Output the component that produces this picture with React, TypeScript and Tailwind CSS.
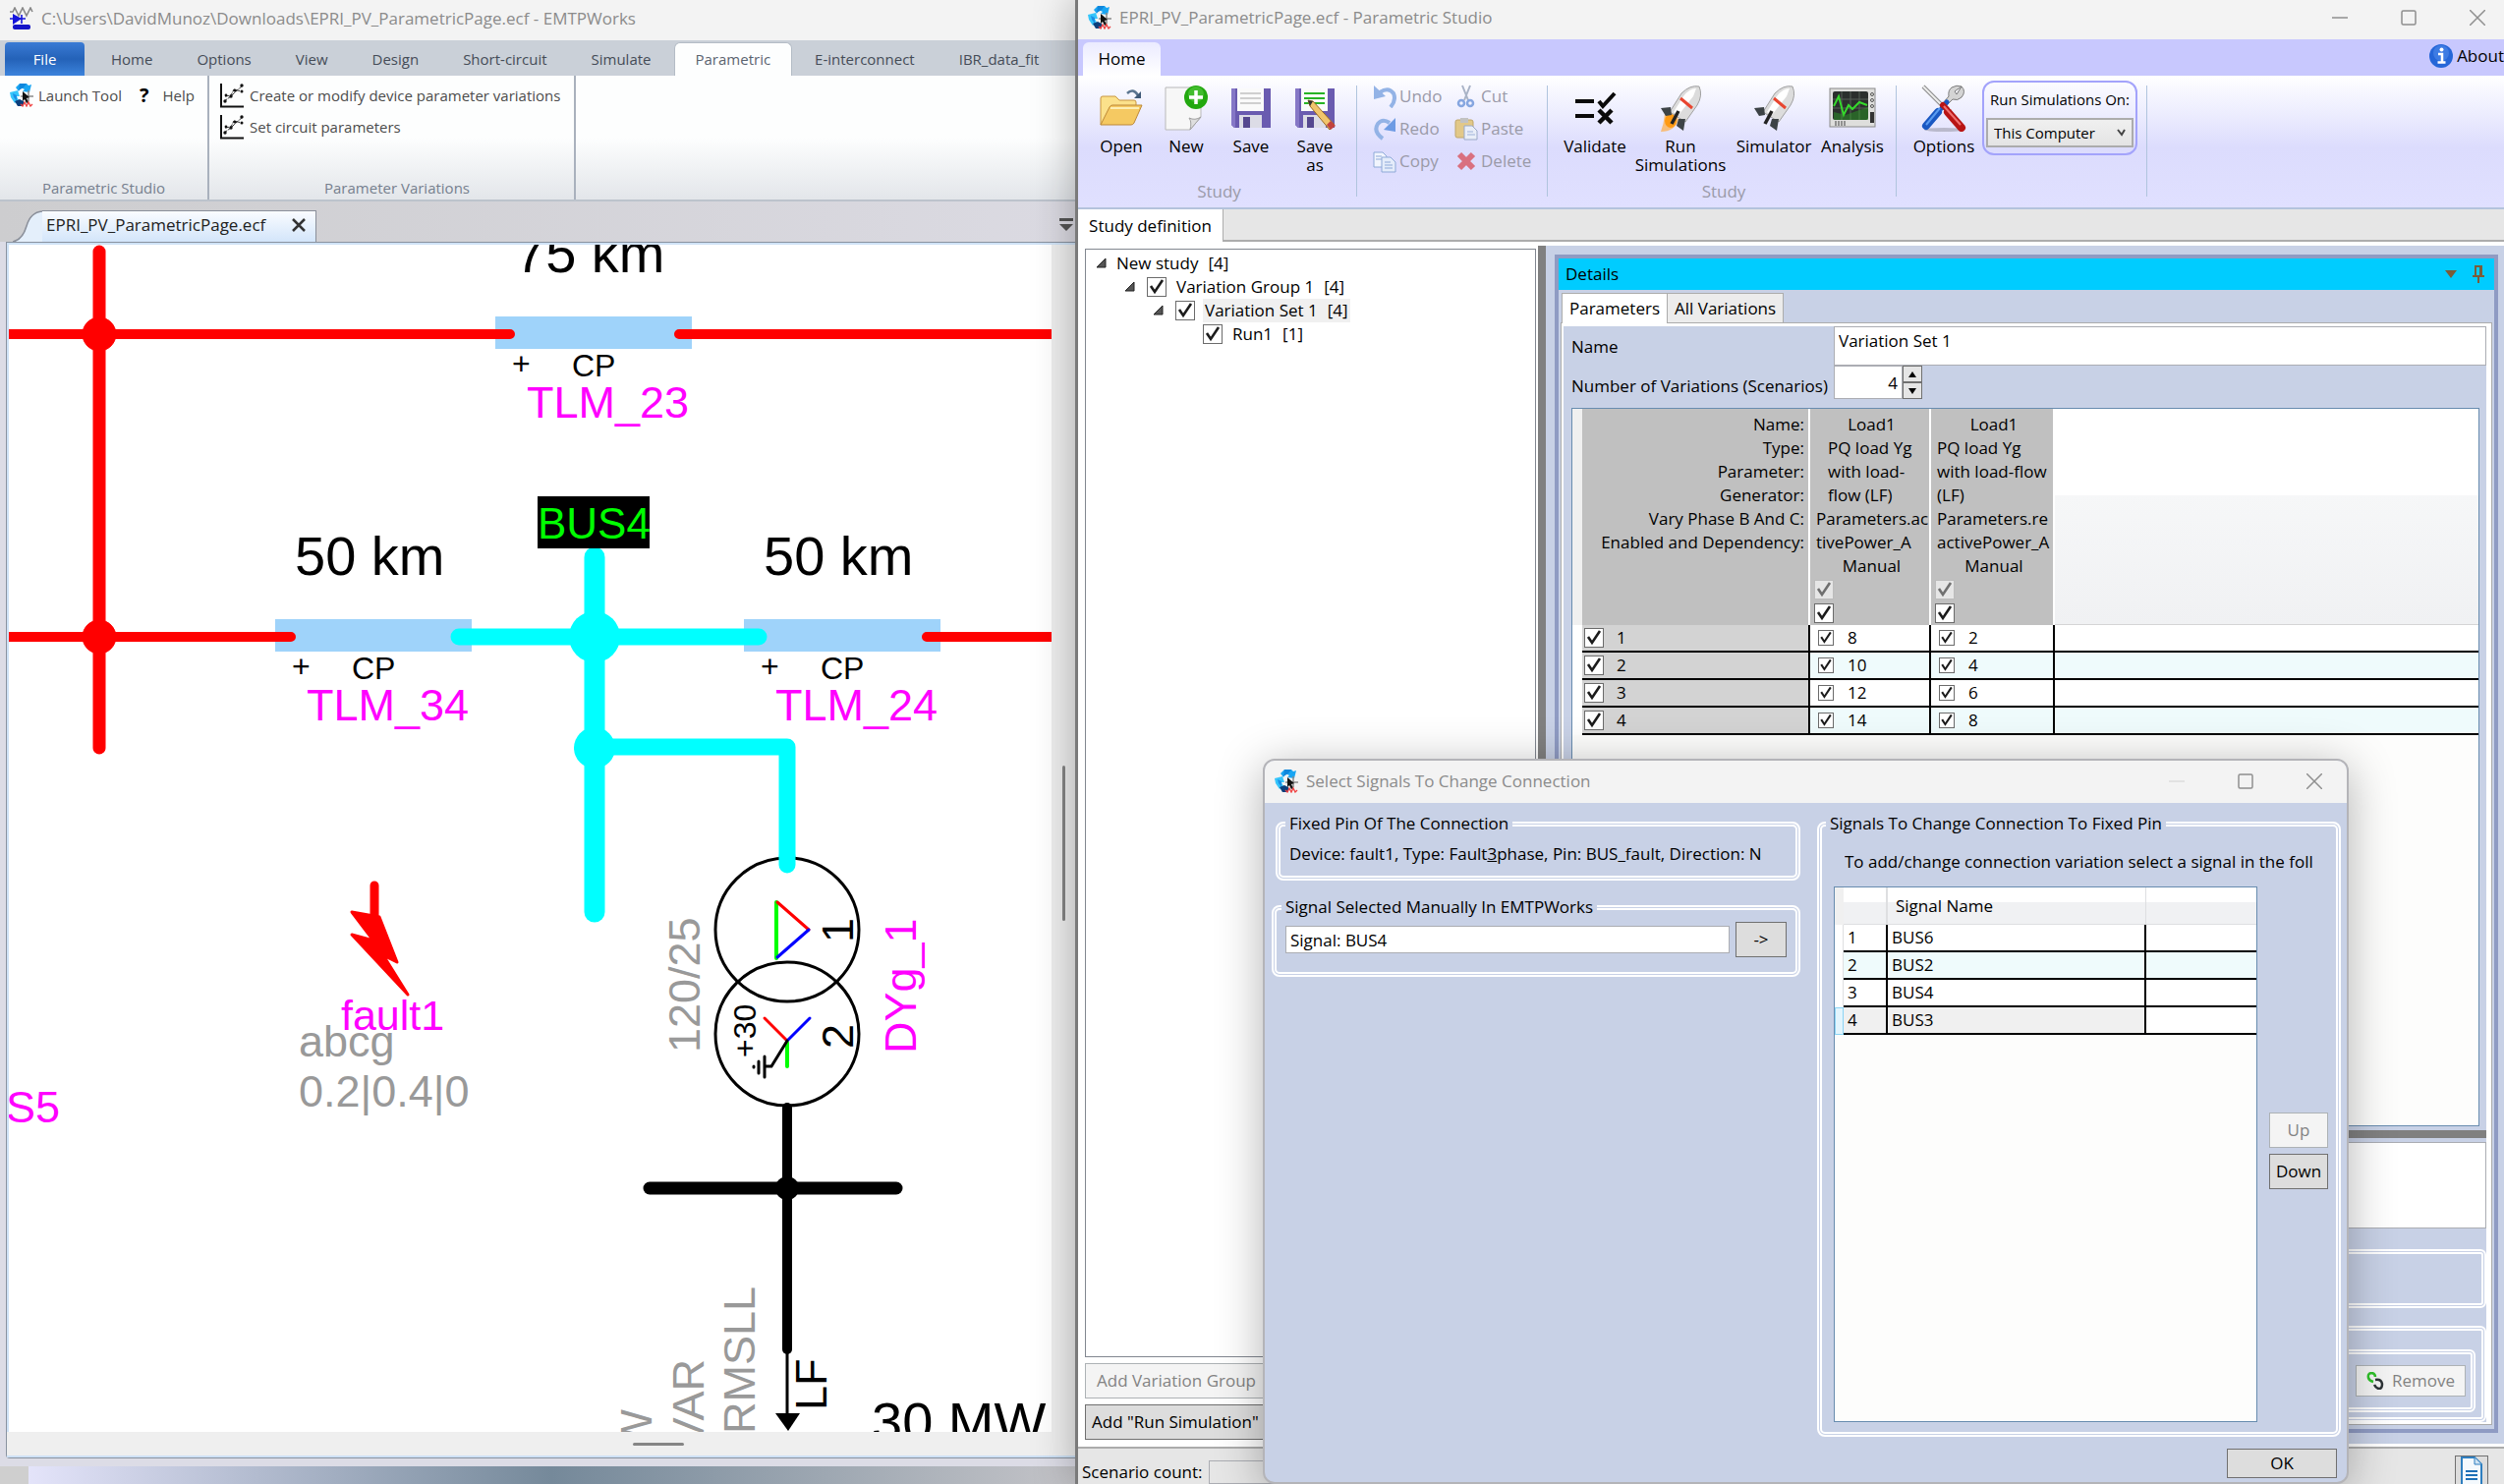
import type { ReactNode } from "react";
import clsx from "clsx";

const ribbonTabs = [
  "Home",
  "Options",
  "View",
  "Design",
  "Short-circuit",
  "Simulate",
  "Parametric",
  "E-interconnect",
  "IBR_data_fit",
];

const scenarios = [
  { id: 1, p: 8, q: 2 },
  { id: 2, p: 10, q: 4 },
  { id: 3, p: 12, q: 6 },
  { id: 4, p: 14, q: 8 },
];

const signals = ["BUS6", "BUS2", "BUS4", "BUS3"];

/* ---------- icons ---------- */

function StudioIcon() {
  return (
    <svg width="24" height="24" viewBox="0 0 24 24" className="shrink-0">
      <path d="M6 4 10 0h7l2 2 3-1-2 8-7-1 2-2-4-2-2 4z" fill="#19a5f2" />
      <path d="m10 0 7 0-3 4-5 3z" fill="#0f86dc" />
      <path d="M0 9l8-2 2 6-3 0 2 4-4 3-4-6z" fill="#35c5fb" />
      <path d="m3 10 4 2 0 6-3-4z" fill="#1b8fe6" />
      <path d="M5 18l5-2 4 2v5H8z" fill="#0b3f7c" />
      <path d="M11 13h13M19 7v11" stroke="#8a8a8a" strokeWidth="1.5" />
      <path d="m13 8 7 6-3 1 2 4-2 1-2-4-2 2z" fill="#111" />
      <path d="m11 21 2 2 2-4 2 4 2-4 2 4 2-2" fill="none" stroke="#f04040" strokeWidth="1.3" />
    </svg>
  );
}

function WorksIcon() {
  return (
    <svg width="24" height="24" viewBox="0 0 24 24" className="shrink-0">
      <path d="M0 5h3l2-4 4 8 4-8 4 8 4-8 2 4" fill="none" stroke="#888" strokeWidth="1.6" />
      <path d="m3 7 9 5-9 6z" fill="#1414dc" />
      <path d="M12 8v9M0 12h16" stroke="#1414dc" strokeWidth="1.6" />
      <rect x="3" y="18" width="18" height="5" rx="2" fill="#1414c8" />
    </svg>
  );
}

function PlotIcon() {
  return (
    <svg width="25" height="25" viewBox="0 0 25 25" className="shrink-0">
      <path d="M1 0v23.5h23" fill="none" stroke="#111" strokeWidth="2" />
      <path d="m4 18 7-5 5-5 7-6M5 13l6-1 3-6 8 2" fill="none" stroke="#333" strokeWidth="1" strokeDasharray="4 1" />
      <g fill="#111">
        <circle cx="22" cy="2" r="1.7" />
        <circle cx="22" cy="8" r="1.5" />
        <circle cx="15" cy="7" r="1.6" />
        <circle cx="11" cy="13" r="1.7" />
        <circle cx="6" cy="12" r="1.4" />
        <circle cx="5" cy="18" r="1.7" />
      </g>
    </svg>
  );
}

function OpenIcon() {
  return (
    <svg width="46" height="40" viewBox="0 0 46 40">
      <path d="M29 5q6-6 11 2" fill="none" stroke="#5b7590" strokeWidth="2.5" />
      <path d="M43 3v7h-7z" fill="#3f5a78" />
      <path d="M2 37V10q0-2 2-2h13l4 4h15q2 0 2 2v6" fill="#fbe18b" stroke="#c9963f" />
      <path d="M2 37 11 19q1-2 3-2h30l-8 18q-1 2-3 2z" fill="#f5c962" stroke="#bd8837" />
      <path d="M12 20h29" stroke="#fdeeb5" strokeWidth="2" />
    </svg>
  );
}

function NewIcon() {
  return (
    <svg width="46" height="48" viewBox="0 0 46 48">
      <path d="M2 3h36v30L27 46H2z" fill="#f7f7f7" stroke="#b9b9b9" />
      <path d="M27 46q2-8-1-12 6 3 12-1z" fill="#dedede" stroke="#a0a0a0" />
      <circle cx="33" cy="13" r="12" fill="#22a80f" />
      <circle cx="33" cy="10" r="8" fill="#5fd04b" opacity=".5" />
      <path d="M33 6v14M26 13h14" stroke="#fff" strokeWidth="3.5" />
    </svg>
  );
}

function SaveIcon({ pencil = false }: { pencil?: boolean }) {
  return (
    <svg width="48" height="46" viewBox="0 0 48 46">
      <path d="M4 3h40v40H7l-3-3z" fill="#6a5bb0" />
      <path d="M4 3h4v40H7l-3-3z" fill="#8577c6" />
      <rect x="10" y="3" width="27" height="23" fill="#fafafa" />
      <path d="M13 8h21M13 13h21M13 18h21" stroke={pencil ? "#27b324" : "#cfcfcf"} strokeWidth="1.8" />
      <rect x="12" y="30" width="23" height="13" fill="#dcdce6" />
      <rect x="16" y="32" width="7" height="11" fill="#55488f" />
      {pencil && (
        <>
          <path d="m17 15 5 1 22 24-5 5-20-24z" fill="#f1c56b" stroke="#9a6b24" />
          <path d="m17 15 5 1-3 5z" fill="#333" />
          <path d="m40 36 5 5-5 4-4-5z" fill="#c2423f" />
        </>
      )}
    </svg>
  );
}

function ValidateIcon() {
  return (
    <svg width="44" height="36" viewBox="0 0 44 36" fill="none" stroke="#0a0a0a">
      <path d="M2 11h19M2 26h19" strokeWidth="4" />
      <path d="m26 11 4 5L42 3" strokeWidth="4" />
      <path d="m26 20 13 13M39 20 26 33" strokeWidth="4.5" />
    </svg>
  );
}

function RocketIcon({ lit = false }: { lit?: boolean }) {
  return (
    <svg width="48" height="48" viewBox="0 0 48 48">
      {lit && <path d="M8 30q10-6 14 6-4 12-18 12 3-8 4-18z" fill="#ffad42" opacity=".7" />}
      {lit && <ellipse cx="14" cy="37" rx="6" ry="7" fill="#ff9a14" />}
      <path d="M43 2q4 9-2 19L29 38 13 28 25 9Q34 0 43 2z" fill="#dcdcdc" stroke="#a0a0a0" />
      <path d="M40 4Q33 4 27 12L17 28l5 3L37 12z" fill="#fff" />
      <path d="m24 14 12 10" stroke="#e8452f" strokeWidth="3" />
      <path d="M14 23 4 24l5 8 6-1zM29 35l-2 12-7-5 2-7z" fill="#3d4346" />
      <path d="m22 27-7 13" stroke="#222" strokeWidth="3.5" />
    </svg>
  );
}

function ScopeIcon() {
  return (
    <svg width="48" height="42" viewBox="0 0 48 42">
      <rect x="1" y="1" width="46" height="39" fill="#dededc" stroke="#8a8a8a" />
      <rect x="4" y="4" width="36" height="29" rx="2" fill="#2b2f2d" />
      <path d="M4 12h36M4 21h36M13 4v29M22 4v29M31 4v29" stroke="#566058" />
      <path d="M5 19 10 9l5 19 5-10 4 4 7-7 8 3" fill="none" stroke="#35d82c" strokeWidth="2" />
      <path d="M5 33v-8l12 3 14-5 9-3v13z" fill="#2bb524" opacity=".4" />
      <path d="M7 34v5M10 34v5M13 34v5M16 34v5" stroke="#444" />
      <g fill="none" stroke="#555">
        <circle cx="44" cy="7" r="1.5" />
        <circle cx="44" cy="13" r="1.5" />
        <circle cx="44" cy="19" r="1.5" />
      </g>
      <rect x="42" y="25" width="4" height="11" fill="#333" />
    </svg>
  );
}

function ToolsIcon() {
  return (
    <svg width="48" height="48" viewBox="0 0 48 48">
      <ellipse cx="24" cy="46" rx="20" ry="2" fill="#b9b9cc" />
      <path d="m3 2 21 21" stroke="#8b8b8b" strokeWidth="4" />
      <path d="m3 2 21 21" stroke="#eee" strokeWidth="2" />
      <path d="M42 2q5 5 0 11-4 4-9 2l-8 8-3-3 7-8q-1-6 3-9 5-3 10-1l-7 5 2 3z" fill="#d4d4d4" stroke="#7c7c7c" />
      <path d="m27 18-5 6" stroke="#1a58c2" strokeWidth="5" strokeLinecap="round" />
      <path d="M18 28 6 42" stroke="#1a58c2" strokeWidth="8" strokeLinecap="round" />
      <path d="M20 24 6 41" stroke="#5a9bf0" strokeWidth="2" />
      <path d="m23 21 4 4" stroke="#b81414" strokeWidth="6" strokeLinecap="round" />
      <path d="m28 28 14 16" stroke="#b81414" strokeWidth="8" strokeLinecap="round" />
      <path d="m24 22 17 19" stroke="#f07070" strokeWidth="2" />
    </svg>
  );
}

function UndoIcon() {
  return (
    <svg width="24" height="24" viewBox="0 0 24 24">
      <path d="M7 8q9-6 14 1 3 7-3 14" fill="none" stroke="#93b3e6" strokeWidth="4" />
      <path d="M1 1v14l12-3z" fill="#93b3e6" />
    </svg>
  );
}

function RedoIcon() {
  return (
    <svg width="24" height="24" viewBox="0 0 24 24">
      <path d="M17 6Q10 1 5 7q-5 8 5 15" fill="none" stroke="#93b3e6" strokeWidth="4" />
      <path d="M23 1v14l-12-2z" fill="#6d9be4" />
    </svg>
  );
}

function CopyIcon() {
  return (
    <svg width="24" height="24" viewBox="0 0 24 24" stroke="#8ea9d8">
      <path d="M1 3h9l4 4v11H1z" fill="#f1f5fd" />
      <path d="M9 8h9l5 5v10H9z" fill="#e4ecfa" />
      <path d="M3 7h6M3 10h6M12 13h6M12 16h8M12 19h8" />
    </svg>
  );
}

function CutIcon() {
  return (
    <svg width="20" height="24" viewBox="0 0 20 24" fill="none">
      <path d="m6 1 6 15M14 1 8 16" stroke="#a9b3c6" strokeWidth="2" />
      <circle cx="5" cy="19" r="3" stroke="#86a6e0" strokeWidth="2.5" />
      <circle cx="14" cy="19" r="3" stroke="#86a6e0" strokeWidth="2.5" />
    </svg>
  );
}

function PasteIcon() {
  return (
    <svg width="24" height="24" viewBox="0 0 24 24">
      <rect x="1" y="3" width="18" height="18" rx="2" fill="#e2c888" stroke="#bfa66b" />
      <rect x="6" y="1" width="8" height="5" fill="#c2c2c2" />
      <path d="M10 9h8l5 5v9H10z" fill="#e9eef8" stroke="#9aa9c8" />
      <path d="M13 15h6M13 18h8" stroke="#9db1da" />
    </svg>
  );
}

function DeleteIcon() {
  return (
    <svg width="20" height="20" viewBox="0 0 20 20">
      <path d="m3 3 14 14M17 3 3 17" stroke="#d9707f" strokeWidth="6" />
    </svg>
  );
}

function InfoIcon() {
  return (
    <svg width="24" height="24" viewBox="0 0 24 24">
      <circle cx="12" cy="12" r="12" fill="#2566d8" />
      <circle cx="12" cy="9" r="8" fill="#5590ee" opacity=".5" />
      <path d="M9 10h4v8M8.5 18.5h8" fill="none" stroke="#fff" strokeWidth="2.5" />
      <circle cx="12.500" cy="5.500" r="2" fill="#fff" />
    </svg>
  );
}

function LinkIcon() {
  return (
    <svg width="18" height="18" viewBox="0 0 18 18" fill="none">
      <path d="M9 5Q9 2 6 1 1 1 2 6q1 3 5 4" stroke="#2fc12a" strokeWidth="2.5" />
      <path d="M9 8q6-1 7 4 0 5-3 5-3 0-5-4" stroke="#2d3336" strokeWidth="2.5" />
    </svg>
  );
}

function ReportIcon() {
  return (
    <svg width="24" height="30" viewBox="0 0 24 30">
      <path d="M2 1h13l7 7v21H2z" fill="#f4f9fd" stroke="#2f7fc0" strokeWidth="2" />
      <path d="M15 1v7h7" fill="#cfe3f3" stroke="#2f7fc0" />
      <path d="M6 15h12M6 19h12M6 23h12" stroke="#1e6fb6" strokeWidth="2" />
    </svg>
  );
}

function Expander() {
  return (
    <svg width="10" height="10" viewBox="0 0 10 10" className="shrink-0">
      <path d="M9 0v9H0z" fill="#555" stroke="#222" />
    </svg>
  );
}

/* ---------- small controls ---------- */

function Check({ label, size = "md", disabled = false }: { label: string; size?: "sm" | "md"; disabled?: boolean }) {
  const box = size === "sm" ? "size-4" : "size-5";
  return (
    <span className={clsx("grid shrink-0 *:[grid-area:1/1]", box)}>
      <input
        type="checkbox"
        defaultChecked
        disabled={disabled}
        aria-label={label}
        className={clsx(
          "appearance-none border",
          box,
          disabled ? "border-[#bcbcbc] bg-[#e6e6e6]" : "border-[#6b6b6b] bg-white",
        )}
      />
      <svg viewBox="0 0 20 20" className={clsx("pointer-events-none", box)}>
        <path d="m4 9 4 6 8-12" fill="none" stroke={disabled ? "#707070" : "#1c1c1c"} strokeWidth="2.6" />
      </svg>
    </span>
  );
}

function CaptionButtons({ dimMin = false }: { dimMin?: boolean }) {
  return (
    <div className="flex gap-4">
      <button aria-label="Minimize" className="grid w-[54px] place-items-center">
        <svg width="16" height="16" stroke={dimMin ? "#dcdcdc" : "#8f8f8f"} strokeWidth="1.5">
          <path d="M0 8h16" />
        </svg>
      </button>
      <button aria-label="Maximize" className="grid w-[54px] place-items-center">
        <svg width="16" height="16" fill="none" stroke="#8f8f8f" strokeWidth="1.5">
          <rect x="1" y="1" width="14" height="14" rx="1.5" />
        </svg>
      </button>
      <button aria-label="Close" className="grid w-[54px] place-items-center">
        <svg width="16" height="16" stroke="#8f8f8f" strokeWidth="1.5">
          <path d="m0 0 16 16M16 0 0 16" />
        </svg>
      </button>
    </div>
  );
}

function RibbonButton({ icon, className, children }: { icon: ReactNode; className: string; children: ReactNode }) {
  return (
    <button className={clsx("flex flex-col items-center gap-1 leading-[19px]", className)}>
      <span className="grid h-[50px] place-items-center">{icon}</span>
      {children}
    </button>
  );
}

function EditButton({ icon, children }: { icon: ReactNode; children: ReactNode }) {
  return (
    <button disabled className="flex h-[33px] items-center gap-[3px] text-[#9a9aa8]">
      <span className="grid w-6 place-items-center">{icon}</span>
      {children}
    </button>
  );
}

function RibbonSeparator() {
  return <div className="mt-[10px] h-[113px] w-px shrink-0 bg-[#b0c4de]" />;
}

/* ---------- EMTPWorks window ---------- */

function Line({ x, y, name, length }: { x: number; y: number; name: string; length: string }) {
  return (
    <g>
      <rect x={x} y={y - 18} width="200" height="33" fill="#9fd3fa" />
      <text x={x + 20} y={y - 63} fontSize="56">{length}</text>
      <text x={x + 17} y={y + 41} fontSize="32">+</text>
      <text x={x + 78} y={y + 43} fontSize="32">CP</text>
      <text x={x + 32} y={y + 85} fontSize="45" fill="#f0f">{name}</text>
    </g>
  );
}

function VerticalText({ x, y, size = 45, fill, end = false, children }: { x: number; y: number; size?: number; fill?: string; end?: boolean; children: string }) {
  return (
    <text transform={`translate(${x} ${y}) rotate(-90)`} fontSize={size} fill={fill} textAnchor={end ? "end" : "start"}>
      {children}
    </text>
  );
}

function Schematic() {
  return (
    <svg className="absolute inset-0 size-full bg-white font-['Liberation_Sans',sans-serif]">
      <g transform="translate(-9 -249)" strokeLinecap="round">
        <Line x={504} y={340} name="TLM_23" length="75 km" />
        <Line x={280} y={648} name="TLM_34" length="50 km" />
        <Line x={757} y={648} name="TLM_24" length="50 km" />

        <g stroke="#f00" fill="#f00">
          <path d="M101 256v505" strokeWidth="13" />
          <path d="M0 340h519M691 340h400M0 648h296M943 648h150" strokeWidth="10" />
          <circle cx="101" cy="340" r="17" />
          <circle cx="101" cy="648" r="17" />
        </g>

        <g stroke="#0ff" fill="none">
          <path d="M605 567v361" strokeWidth="21" />
          <path d="M467 648h305M605 760h196v112" strokeWidth="17" strokeLinejoin="round" />
          <circle cx="605" cy="648" r="26" fill="#0ff" stroke="none" />
          <circle cx="605" cy="761" r="21" fill="#0ff" stroke="none" />
        </g>

        <rect x="547" y="505" width="114" height="53" />
        <text x="547" y="548" fontSize="44" fill="#0f0">BUS4</text>

        <path d="M381 901v34" stroke="#f00" strokeWidth="9" />
        <path
          d="m358 928 28 5 18 46-14-7 25 40-57-61 22 6z"
          fill="#f00"
          stroke="#f00"
          strokeWidth="3"
          strokeLinejoin="round"
        />
        <text x="347" y="1048" fontSize="43" fill="#f0f">fault1</text>
        <text x="304" y="1075" fontSize="45" fill="#999">abcg</text>
        <text x="304" y="1126" fontSize="45" fill="#999">0.2|0.4|0</text>
        <text x="6" y="1142" fontSize="45" fill="#f0f">S5</text>

        <g fill="none" strokeWidth="3">
          <circle cx="801" cy="946" r="73" stroke="#000" />
          <circle cx="801" cy="1052" r="73" stroke="#000" />
          <path d="M790 918v57" stroke="#0f0" strokeWidth="4" />
          <path d="m791 918 32 28" stroke="#f00" />
          <path d="m823 946-32 28" stroke="#00f" />
          <path d="m778 1036 23 23" stroke="#f00" />
          <path d="m824 1036-23 23" stroke="#00f" />
          <path d="M801 1061v24" stroke="#0f0" strokeWidth="4" />
          <path d="m801 1059-16 26h-6M778 1075v21M772 1080v12M767 1085v1" stroke="#000" />
        </g>
        <path d="M801 880v-8" stroke="#0ff" strokeWidth="17" />

        <VerticalText x={868} y={959}>1</VerticalText>
        <VerticalText x={868} y={1067}>2</VerticalText>
        <VerticalText x={769} y={1076} size={32}>+30</VerticalText>
        <VerticalText x={712} y={1071} fill="#999">120/25</VerticalText>
        <VerticalText x={932} y={1072} fill="#f0f">DYg_1</VerticalText>

        <path d="M801 1127v246" stroke="#000" strokeWidth="10" />
        <path d="M661 1209h251" stroke="#000" strokeWidth="13" />
        <circle cx="801" cy="1209" r="12" />
        <path d="M801 1373v70" stroke="#000" strokeWidth="3" />
        <path d="M789 1438h25l-12 18z" />
        <VerticalText x={841} y={1435}>LF</VerticalText>
        <VerticalText x={768} y={1309} fill="#999" end>kVRMSLL</VerticalText>
        <VerticalText x={716} y={1383} fill="#999" end>MVAR</VerticalText>
        <VerticalText x={663} y={1434} fill="#999" end>MW</VerticalText>
        <text x="887" y="1466" fontSize="56">30 MW</text>
      </g>
    </svg>
  );
}

function WorksWindow() {
  return (
    <section className="flex min-w-0 flex-col overflow-hidden bg-[#dcdce6] text-[15px]">
      <div className="flex h-[41px] shrink-0 items-center gap-2 bg-[#f3f3f3] px-[10px] pb-1 text-[17px] text-[#8b8b8b]">
        <WorksIcon />
        <span className="whitespace-nowrap">C:\Users\DavidMunoz\Downloads\EPRI_PV_ParametricPage.ecf - EMTPWorks</span>
      </div>

      <nav className="flex h-9 shrink-0 items-end gap-px bg-[#cad0d8] pl-[5px]">
        <button className="mr-1 h-[34px] w-[81px] rounded-t bg-linear-to-b from-[#3a7bd5] via-[#2462b8] to-[#3c83dc] text-white">
          File
        </button>
        {ribbonTabs.map((tab) => (
          <button
            key={tab}
            className={clsx(
              "h-[34px] whitespace-nowrap rounded-t-md border-x border-t px-[21px]",
              tab === "Parametric"
                ? "border-[#b4bcc6] bg-[#fdfefe] text-[#5b6470]"
                : "border-transparent text-[#454c57]",
            )}
          >
            {tab}
          </button>
        ))}
      </nav>

      <div className="flex h-[128px] shrink-0 border-b-2 border-[#bcc3cc] bg-linear-to-b from-[#fdfefe] from-50% to-[#e3e6ea] text-[#4c4c4c]">
        <div className="flex w-[213px] flex-col border-r-2 border-[#a9b1bd] pt-1">
          <div className="flex h-8 items-center pl-[10px]">
            <button className="flex items-center gap-[5px] whitespace-nowrap">
              <StudioIcon />
              Launch Tool
            </button>
            <button className="ml-[18px] flex items-center gap-[14px]">
              <span className="text-[20px] font-bold text-black">?</span>
              Help
            </button>
          </div>
          <div className="mt-auto h-[22px] text-center leading-5 text-[#76808e]">Parametric Studio</div>
        </div>
        <div className="flex w-[373px] flex-col border-r-2 border-[#a9b1bd] pt-1 pl-[11px]">
          <button className="flex h-8 items-center gap-[5px] whitespace-nowrap">
            <PlotIcon />
            Create or modify device parameter variations
          </button>
          <button className="flex h-8 items-center gap-[5px] whitespace-nowrap">
            <PlotIcon />
            Set circuit parameters
          </button>
          <div className="mt-auto h-[22px] text-center leading-5 text-[#76808e]">Parameter Variations</div>
        </div>
      </div>

      <div className="flex h-[41px] shrink-0 items-end bg-linear-to-r from-[#cdcdcf] to-[#dbdae2] pl-[13px]">
        <svg width="30" height="32" viewBox="0 0 30 32" className="shrink-0">
          <path d="M0 32Q10 30 14 16T30 1v31z" fill="#e4effb" />
          <path d="M0 32Q10 30 14 16T30 1" fill="none" stroke="#8a8f9a" strokeWidth="1.5" />
        </svg>
        <div className="flex h-8 w-[279px] items-center justify-between border-t border-r border-[#8a8f9a] bg-linear-to-b from-[#fafcff] to-[#d3e5fa] pr-[10px] pb-1 pl-1 text-[17px] text-[#222]">
          EPRI_PV_ParametricPage.ecf
          <button aria-label="Close document">
            <svg width="14" height="14" stroke="#333" strokeWidth="2.5">
              <path d="m1 1 12 12M13 1 1 13" />
            </svg>
          </button>
        </div>
        <button aria-label="Open documents" className="mr-[2px] mb-[10px] ml-auto">
          <svg width="14" height="14" fill="#555">
            <path d="M0 0h14v3H0zM0 6h14l-7 7z" />
          </svg>
        </button>
      </div>

      <div className="ml-[6px] flex min-h-0 flex-1 flex-col rounded-bl border border-r-0 border-[#8a93a0] bg-[#efefef]">
        <div className="flex min-h-0 flex-1 border-t-2 border-l-2 border-[#cfe2f6]">
          <div className="relative min-w-0 flex-1 overflow-hidden">
            <Schematic />
          </div>
          <div className="flex w-6 flex-col items-center pt-[530px]">
            <div className="h-[158px] w-[3px] rounded bg-[#858585]" />
          </div>
        </div>
        <div className="flex h-[26px] items-center border-b-2 border-[#cfe2f6] pl-[637px]">
          <div className="h-[3px] w-[52px] rounded bg-[#858585]" />
        </div>
      </div>
      <div className="mt-2 flex h-[18px] shrink-0 bg-[#cfcfcf] pl-[29px]">
        <div className="flex-1 bg-linear-to-r from-[#e4e4fa] via-[#75899a] to-[#c4c4c8]" />
      </div>
    </section>
  );
}

/* ---------- Parametric Studio window ---------- */

function StudioRibbon() {
  return (
    <div className="flex h-[136px] shrink-0 border-b-2 border-[#b4c3dc] bg-linear-to-b from-white via-[#dcdcfd] via-55% to-[#e0e0ff]">
      <div className="flex w-[283px] flex-col pt-2">
        <div className="flex items-start pl-[11px]">
          <RibbonButton className="w-[66px]" icon={<OpenIcon />}>Open</RibbonButton>
          <RibbonButton className="w-[66px]" icon={<NewIcon />}>New</RibbonButton>
          <RibbonButton className="w-[66px]" icon={<SaveIcon />}>Save</RibbonButton>
          <RibbonButton className="w-16 px-2" icon={<SaveIcon pencil />}>Save as</RibbonButton>
        </div>
        <div className="mt-auto mb-1 pl-1 text-center text-[#9a9aa8]">Study</div>
      </div>
      <RibbonSeparator />
      <div className="w-[193px] pt-1 pl-4">
        <div className="grid grid-cols-[83px_auto]">
          <EditButton icon={<UndoIcon />}>Undo</EditButton>
          <EditButton icon={<CutIcon />}>Cut</EditButton>
          <EditButton icon={<RedoIcon />}>Redo</EditButton>
          <EditButton icon={<PasteIcon />}>Paste</EditButton>
          <EditButton icon={<CopyIcon />}>Copy</EditButton>
          <EditButton icon={<DeleteIcon />}>Delete</EditButton>
        </div>
      </div>
      <RibbonSeparator />
      <div className="flex w-[354px] flex-col pt-2">
        <div className="flex items-start pl-2">
          <RibbonButton className="w-[80px]" icon={<ValidateIcon />}>Validate</RibbonButton>
          <RibbonButton className="w-[94px]" icon={<RocketIcon lit />}>Run Simulations</RibbonButton>
          <RibbonButton className="w-24" icon={<RocketIcon />}>Simulator</RibbonButton>
          <RibbonButton className="w-16" icon={<ScopeIcon />}>Analysis</RibbonButton>
        </div>
        <div className="mt-auto mb-1 pl-1 text-center text-[#9a9aa8]">Study</div>
      </div>
      <RibbonSeparator />
      <div className="flex w-[254px] items-start gap-[7px] pl-4">
        <RibbonButton className="w-16 pt-2" icon={<ToolsIcon />}>Options</RibbonButton>
        <div className="mt-[5px] flex h-[76px] w-[158px] flex-col rounded-xl border-2 border-[#a3a3fb] px-[2px] pt-[2px] text-[15px]">
          <label htmlFor="target" className="h-[34px] pl-1 leading-[30px] whitespace-nowrap">Run Simulations On:</label>
          <div className="grid items-center *:[grid-area:1/1]">
            <select
              id="target"
              className="h-[30px] w-full appearance-none border-2 border-[#acacac] bg-linear-to-b from-[#f0f0f0] to-[#e4e4e4] pl-[6px]"
            >
              <option>This Computer</option>
            </select>
            <svg width="9" height="8" className="pointer-events-none mr-2 justify-self-end" fill="none" stroke="#444" strokeWidth="2">
              <path d="m1 1 4 5 3-5" />
            </svg>
          </div>
        </div>
      </div>
      <RibbonSeparator />
    </div>
  );
}

function TreeLabel({ children, count, selected = false }: { children: string; count: number; selected?: boolean }) {
  return (
    <span className={clsx("flex h-6 items-center gap-[10px] px-[2px]", selected && "bg-[#f0f0f0]")}>
      {children} <span>[{count}]</span>
    </span>
  );
}

function StudyTree() {
  return (
    <div className="flex w-[468px] shrink-0 flex-col bg-white pt-[3px] pl-[7px]">
      <ul className="w-[459px] flex-1 border border-[#828790] pt-[2px] whitespace-nowrap">
        <li className="flex items-center gap-2 pl-[11px]">
          <Expander />
          <TreeLabel count={4}>New study</TreeLabel>
        </li>
        <li className="flex items-center gap-3 pl-10">
          <Expander />
          <span className="flex items-center gap-2">
            <Check label="Variation Group 1" />
            <TreeLabel count={4}>Variation Group 1</TreeLabel>
          </span>
        </li>
        <li className="flex items-center gap-3 pl-[69px]">
          <Expander />
          <span className="flex items-center gap-2">
            <Check label="Variation Set 1" />
            <TreeLabel count={4} selected>Variation Set 1</TreeLabel>
          </span>
        </li>
        <li className="flex items-center gap-2 pl-[119px]">
          <Check label="Run1" />
          <TreeLabel count={1}>Run1</TreeLabel>
        </li>
      </ul>
      <div className="flex w-[459px] flex-col gap-[6px] pt-[6px] pb-[7px] whitespace-nowrap">
        <button disabled className="h-9 border border-[#adb2b5] bg-[#f4f4f4] pl-[11px] text-left text-[#838383]">
          Add Variation Group
        </button>
        <button className="h-9 border border-[#707070] bg-[#dddddd] pl-[6px] text-left">Add "Run Simulation"</button>
      </div>
    </div>
  );
}

function ParameterHeader({ type, parameter, indent }: { type: string[]; parameter: string[]; indent: boolean }) {
  return (
    <th className="border-r-2 border-white bg-[#c0c0c0] p-0 text-left align-top font-normal whitespace-nowrap">
      <div className="flex flex-col pt-1 leading-6">
        <span className="pl-1 text-center">Load1</span>
        {type.map((line) => (
          <span key={line} className={indent ? "pl-[18px]" : "pl-[6px]"}>{line}</span>
        ))}
        {parameter.map((line) => (
          <span key={line} className="pl-[6px]">{line}</span>
        ))}
        <span className="pl-1 text-center">Manual</span>
        <span className="flex h-6 items-center pl-1"><Check label="Vary phase B and C" disabled /></span>
        <span className="flex h-6 items-center pl-1"><Check label="Enabled" /></span>
      </div>
    </th>
  );
}

function ScenarioTable() {
  return (
    <table className="w-full table-fixed border-separate border-spacing-0">
      <colgroup>
        <col className="w-[10px]" />
        <col className="w-[232px]" />
        <col className="w-[123px]" />
        <col className="w-[126px]" />
        <col />
      </colgroup>
      <thead>
        <tr className="h-[217px]">
          <td className="bg-[#f0f0f0]" />
          <th className="border-r-2 border-white bg-[#c0c0c0] p-0 text-right align-top font-normal">
            <div className="flex flex-col pt-1 pr-1 leading-6">
              <span>Name:</span>
              <span>Type:</span>
              <span>Parameter:</span>
              <span>Generator:</span>
              <span>Vary Phase B And C:</span>
              <span>Enabled and Dependency:</span>
            </div>
          </th>
          <ParameterHeader indent type={["PQ load Yg", "with load-", "flow (LF)"]} parameter={["Parameters.ac", "tivePower_A"]} />
          <ParameterHeader indent={false} type={["PQ load Yg", "with load-flow", "(LF)"]} parameter={["Parameters.re", "activePower_A"]} />
          <td className="border-b border-[#d5d5d5] bg-linear-to-b from-white from-40% via-[#f6f7f8] via-40% to-[#f0f1f3]" />
        </tr>
      </thead>
      <tbody>
        {scenarios.map((row) => (
          <tr key={row.id} className={clsx("h-7", row.id % 2 ? "bg-white" : "bg-[#effbfc]")}>
            <td className="bg-white" />
            <td className="border-r-2 border-b-2 border-black bg-[#d3d3d3] p-0">
              <div className="flex items-center gap-[13px] pl-[2px]">
                <Check label={`Scenario ${row.id}`} />
                {row.id}
              </div>
            </td>
            {[row.p, row.q].map((value, i) => (
              <td key={i} className="border-r-2 border-b-2 border-black p-0">
                <div className="flex items-center gap-[14px] pl-[8px]">
                  <Check size="sm" label={`Value ${value}`} />
                  {value}
                </div>
              </td>
            ))}
            <td className="border-b-2 border-black" />
          </tr>
        ))}
      </tbody>
    </table>
  );
}

function DetailsPanel() {
  return (
    <div className="flex min-w-0 flex-1 flex-col border-b-3 border-white bg-[#c8d1e6] pt-[9px] pr-[6px] pb-[11px] pl-[9px]">
      <div className="flex flex-1 flex-col border-4 border-[#8f9bc3]">
        <div className="flex h-8 items-center bg-[#00ccff] pr-[10px] pl-[7px]">
          Details
          <button aria-label="Panel menu" className="mr-4 ml-auto">
            <svg width="12" height="10" fill="#7a5c3a"><path d="M0 1h12L6 9z" /></svg>
          </button>
          <button aria-label="Pin panel">
            <svg width="12" height="18" fill="none" stroke="#7a5c3a" strokeWidth="2"><path d="M3 1h6v10H3zM0 11h12M6 11v7M8 1v10" /></svg>
          </button>
        </div>
        <div className="flex h-[33px] items-end pl-[3px]">
          <button className="z-10 -mb-px h-[31px] border border-b-0 border-[#acacac] bg-white px-[7px]">Parameters</button>
          <button className="h-[30px] border border-l-0 border-b-0 border-[#acacac] bg-[#ececec] px-[7px]">All Variations</button>
        </div>
        <div className="mx-[2px] mb-1 flex flex-1 flex-col border border-[#acacac] bg-white pt-[3px] pr-[5px] pb-[2px] pl-[2px]">
          <div className="flex flex-1 flex-col bg-[#c8d1e6]">
            <div className="flex h-10">
              <label htmlFor="name" className="w-[275px] shrink-0 pl-2 leading-[42px]">Name</label>
              <input id="name" defaultValue="Variation Set 1" className="h-10 min-w-0 flex-1 border border-[#abadb3] bg-white px-1 pb-3" />
            </div>
            <div className="flex h-[34px]">
              <label htmlFor="count" className="w-[275px] shrink-0 pl-2 leading-[42px] whitespace-nowrap">
                Number of Variations (Scenarios)
              </label>
              <input id="count" defaultValue="4" className="h-[34px] w-[70px] border border-[#abadb3] bg-white pr-1 text-right" />
              <div className="flex w-5 flex-col">
                <button aria-label="Increase" className="grid h-[17px] place-items-center border border-[#707070] bg-[#e5e5e5]">
                  <svg width="8" height="6"><path d="M4 0l4 6H0z" /></svg>
                </button>
                <button aria-label="Decrease" className="grid h-[17px] place-items-center border border-[#707070] bg-[#e5e5e5]">
                  <svg width="8" height="6"><path d="M4 6 0 0h8z" /></svg>
                </button>
              </div>
            </div>
            <div className="mt-[9px] mr-[7px] ml-2 flex-1 border border-[#688caf] bg-[#fdfdfc]">
              <ScenarioTable />
            </div>
            <div className="mt-1 h-2 bg-[#808080]" />
            <div className="mt-1 h-[88px] border border-[#abadb3] bg-white" />
            <fieldset className="mt-[21px] h-[60px] rounded-md border-5 border-double border-white" />
            <fieldset className="mt-[18px] h-[98px] rounded-md border-5 border-double border-white px-[6px] pt-[19px]">
              <fieldset className="h-16 rounded-md border-5 border-double border-white pt-[11px] pr-[5px]">
                <button disabled className="ml-auto flex h-8 w-[112px] items-center justify-center gap-2 border border-[#adb2b5] bg-[#f4f4f4] text-[#838383]">
                  <LinkIcon />
                  Remove
                </button>
              </fieldset>
            </fieldset>
          </div>
        </div>
      </div>
    </div>
  );
}

function SignalTable() {
  return (
    <table className="w-full table-fixed border-separate border-spacing-0">
      <colgroup>
        <col className="w-[9px]" />
        <col className="w-[45px]" />
        <col className="w-[263px]" />
        <col />
      </colgroup>
      <thead>
        <tr className="h-[38px] bg-linear-to-b from-white from-40% to-[#f0f1f3] to-40%">
          <td className="bg-[#f0f0f0]" />
          <td className="border-r-2 border-b border-[#dedfe1]" />
          <th className="border-r border-b border-[#dedfe1] py-0 pr-0 pl-2 text-left font-normal">Signal Name</th>
          <td className="border-b border-[#dedfe1]" />
        </tr>
      </thead>
      <tbody>
        {signals.map((name, i) => {
          const selected = i === signals.length - 1;
          return (
            <tr key={name} className={clsx("h-7", i % 2 && !selected ? "bg-[#effbfc]" : "bg-white")}>
              <td className={selected ? "border border-[#8ad4f5] bg-[#e3f5fd]" : "border-r border-[#dedfe1] bg-white"} />
              <td className={clsx("border-r-2 border-b-2 border-black p-0 pl-1 leading-[26px]", selected && "bg-[#f0f0f0]")}>{i + 1}</td>
              <td className={clsx("border-r-2 border-b-2 border-black p-0 pl-1 leading-[26px]", selected && "bg-[#f0f0f0]")}>{name}</td>
              <td className="border-b-2 border-black" />
            </tr>
          );
        })}
      </tbody>
    </table>
  );
}

function ConnectionDialog() {
  return (
    <div
      role="dialog"
      aria-label="Select Signals To Change Connection"
      className="absolute top-[772px] right-[158px] bottom-0 left-[188px] flex flex-col overflow-hidden rounded-xl border-2 border-[#b4b4b8] bg-[#c8d1e6] shadow-[0_8px_48px_rgba(0,0,0,0.3)]"
    >
      <div className="flex h-[43px] shrink-0 bg-[#f3f3f3] pr-[6px] pb-[2px] text-[#8b8b8b]">
        <div className="mr-auto flex items-center gap-2 pl-[10px]">
          <StudioIcon />
          Select Signals To Change Connection
        </div>
        <CaptionButtons dimMin />
      </div>
      <div className="flex min-h-0 flex-1 gap-[17px] pt-[9px] pr-[6px] pl-[7px]">
        <div className="flex w-[538px] shrink-0 flex-col gap-[15px]">
          <fieldset className="ml-1 h-[70px] rounded-lg border-5 border-double border-white px-[9px] whitespace-nowrap">
            <legend className="-ml-1 px-1 leading-6">Fixed Pin Of The Connection</legend>
            <p className="pt-[6px]">
              Device: fault1, Type: Fault<u>3</u>phase, Pin: BUS_fault, Direction: N
            </p>
          </fieldset>
          <fieldset className="h-[83px] rounded-lg border-5 border-double border-white px-[9px]">
            <legend className="-ml-1 px-1 leading-6">Signal Selected Manually In EMTPWorks</legend>
            <div className="flex items-center gap-[6px] pt-[3px]">
              <input aria-label="Signal" defaultValue="Signal: BUS4" className="h-7 min-w-0 flex-1 border border-[#abadb3] bg-white px-1" />
              <button className="h-9 w-[52px] border border-[#707070] bg-[#dddddd]">-&gt;</button>
            </div>
          </fieldset>
        </div>
        <fieldset className="flex min-w-0 flex-1 flex-col rounded-lg border-5 border-double border-white pr-2 pb-[10px] pl-3">
          <legend className="-ml-2 px-1 leading-6">Signals To Change Connection To Fixed Pin</legend>
          <p className="mt-[14px] mr-3 ml-[11px] h-[38px] overflow-hidden whitespace-nowrap">
            To add/change connection variation select a signal in the foll
          </p>
          <div className="flex min-h-0 flex-1 gap-3">
            <div className="flex-1 border border-[#688caf] bg-[#fdfdfc]">
              <SignalTable />
            </div>
            <div className="flex w-[60px] flex-col gap-[6px] pt-[230px]">
              <button disabled className="h-9 border border-[#adb2b5] bg-[#f4f4f4] text-[#838383]">Up</button>
              <button className="h-9 border border-[#707070] bg-[#dddddd]">Down</button>
            </div>
          </div>
        </fieldset>
      </div>
      <div className="flex shrink-0 justify-end pt-3 pr-[10px] pb-1">
        <button className="h-[30px] w-[112px] border border-[#707070] bg-[#dddddd]">OK</button>
      </div>
    </div>
  );
}

function StudioWindow() {
  return (
    <section className="relative flex min-w-0 flex-col border-l-3 border-[#7a7a7a] bg-white text-[17px] shadow-[0_0_40px_rgba(0,0,0,0.3)]">
      <div className="flex h-10 shrink-0 bg-[#f3f3f3] pb-1 text-[#8b8b8b]">
        <div className="mr-auto flex items-center gap-2 pl-[10px]">
          <StudioIcon />
          EPRI_PV_ParametricPage.ecf - Parametric Studio
        </div>
        <CaptionButtons />
      </div>
      <div className="flex h-[37px] shrink-0 items-end bg-[#c8c8fe] pl-[5px]">
        <button className="h-[34px] w-[79px] rounded-t-md bg-linear-to-b from-[#ebebff] to-white">Home</button>
        <button className="mt-1 ml-auto flex items-center gap-1 self-start">
          <InfoIcon />
          About
        </button>
      </div>
      <StudioRibbon />
      <div className="flex h-[33px] shrink-0 border-b-2 border-[#acacac] bg-[#e6e6e6]">
        <button className="-mb-[2px] w-[148px] border-r border-[#acacac] bg-white">Study definition</button>
      </div>
      <div className="flex flex-1 border-b-2 border-[#acacac] pt-1">
        <StudyTree />
        <div className="w-2 shrink-0 bg-[#808080]" />
        <DetailsPanel />
      </div>
      <div className="flex h-9 shrink-0 items-center bg-[#e6e6e6] pl-1">
        <label htmlFor="scenarios" className="mt-3 w-[129px] whitespace-nowrap">Scenario count:</label>
        <input id="scenarios" readOnly defaultValue="4" className="mt-3 h-6 w-[130px] border border-[#abadb3] bg-[#e6e6e6] text-center" />
        <button aria-label="Report" className="mt-2 mr-4 ml-auto grid h-[30px] w-[34px] place-items-center border border-[#707070] bg-[#dddddd]">
          <ReportIcon />
        </button>
      </div>
      <ConnectionDialog />
    </section>
  );
}

export default function App() {
  return (
    <main className="grid h-screen min-h-[1100px] grid-cols-[547fr_727fr] overflow-hidden font-['Open_Sans','Noto_Sans',sans-serif] text-black">
      <WorksWindow />
      <StudioWindow />
    </main>
  );
}
